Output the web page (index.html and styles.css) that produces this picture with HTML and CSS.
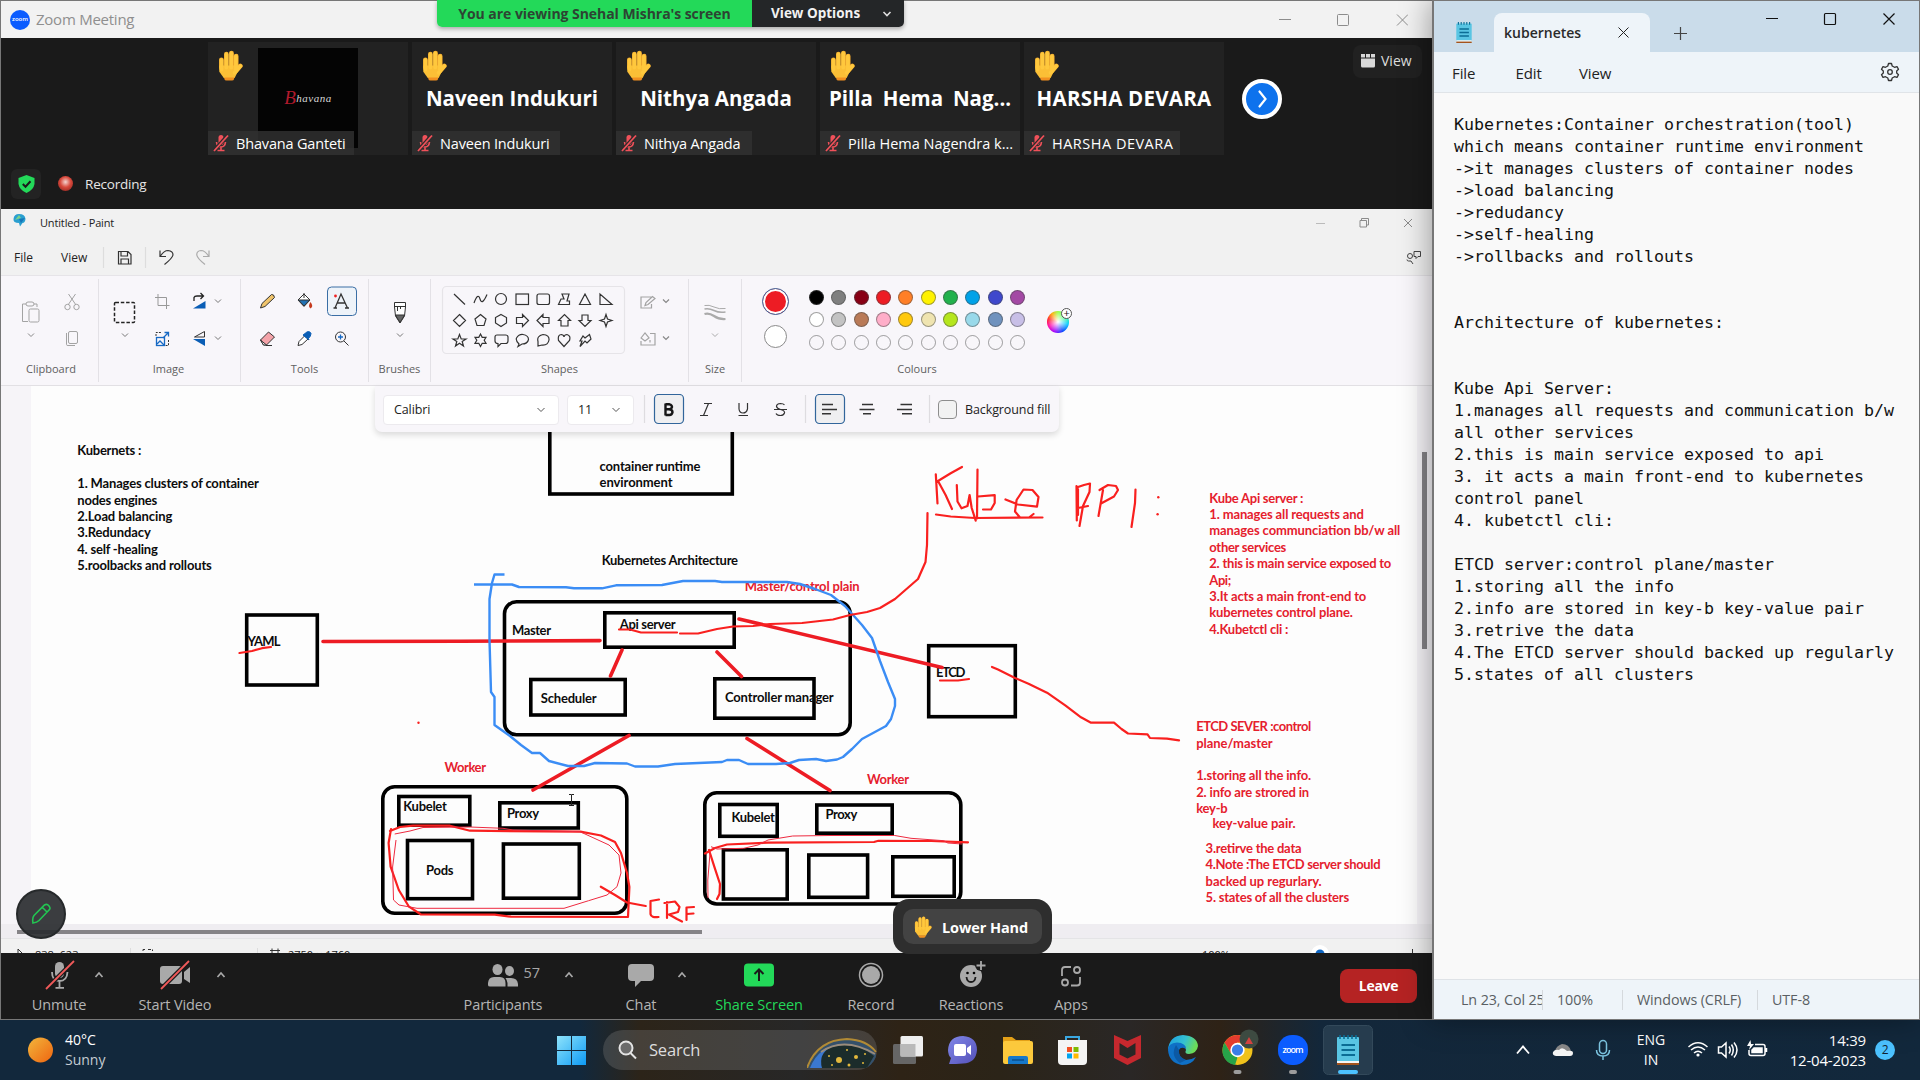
FILE: index.html
```html
<!DOCTYPE html>
<html lang="en">
<head>
<meta charset="utf-8">
<title>Zoom Meeting</title>
<link rel="stylesheet" href="styles.css">
</head>
<body>
<svg class="defs" width="0" height="0">
  <defs>
    <symbol id="hand" viewBox="0 0 24 30">
      <g fill="none" stroke="#e8a22c" stroke-linecap="round" stroke-width="4.6"><path d="M3.2 9.500V17M8 4V15M13 3V15M17.500 6V17M21.500 15.500L17.500 20"/></g>
      <path d="M1.200 15H19.500V20L16 27H5.500L1.200 21Z" fill="#fbbf36"/>
      <g fill="none" stroke="#ffc83d" stroke-linecap="round" stroke-width="3.700"><path d="M3.200 9.500V19M8 4V17M12.700 3V17M17.300 6V19M21.500 15.500L16 22"/></g>
      <path d="M6 26.500H15.500V28Q15 29.500 13.500 29.500H8Q6.500 29.500 6 28Z" fill="#f19020"/>
    </symbol>
    <symbol id="muted" viewBox="0 0 16 18">
      <g fill="none" stroke="#f0515a" stroke-width="1.600"><path d="M3.500 8Q4 13 8 13T12.500 8M8 13V16.500M4.500 16.500H11.500"/></g>
      <rect x="5.500" y="1" width="5" height="10" rx="2.500" fill="#f0515a"/>
      <path d="M1 16.500L15 1" stroke="#2b2b2b" stroke-width="3.500"/><path d="M1 17L15 1.500" stroke="#f0515a" stroke-width="1.800"/>
    </symbol>
    <symbol id="up" viewBox="0 0 10 8"><path d="M1.500 6L5 2L8.500 6" fill="none" stroke="#a9a9a9" stroke-width="1.700"/></symbol>
    <symbol id="pad" viewBox="0 0 22 30">
      <rect y="2" width="22" height="26" rx="1" fill="#59c5e3"/><path d="M0 26H22V28.500H0Z" fill="#f4f4f4"/><path d="M0 28H22V30H0Z" fill="#a4531c"/>
      <path d="M4.500 10H18M4.500 15H18M4.500 20H18" stroke="#0b6d95" stroke-width="2"/><path d="M3 0V4M7 0V4M11 0V4M15 0V4M19 0V4" stroke="#0b6d95" stroke-width="1.600"/>
    </symbol>
    <linearGradient id="sun" x2="1" y2="1"><stop stop-color="#f2b63c"/><stop offset="1" stop-color="#ef6510"/></linearGradient>
    <linearGradient id="win" x2="1" y2="1"><stop stop-color="#8ee3fb"/><stop offset="1" stop-color="#0d9af5"/></linearGradient>
    <linearGradient id="edge" x2="1" y2=".3"><stop stop-color="#1b9de2"/><stop offset=".6" stop-color="#35c1d0"/><stop offset="1" stop-color="#6bdc58"/></linearGradient>
    <linearGradient id="teams" x2="1" y2="1"><stop stop-color="#8087e8"/><stop offset="1" stop-color="#5450b8"/></linearGradient>
  </defs>
</svg>

<div class="desktop">
<section class="zoom">
  <header class="z-title">
    <span class="z-logo">zoom</span><span class="z-name">Zoom Meeting</span>
    <svg class="z-ctl" width="130" height="14" viewBox="1278 12 130 14" fill="none" stroke="#8c8c8c"><path d="M1279 18.500H1291M1397 13.500L1408 24.500M1408 13.500L1397 24.500"/><rect x="1337.500" y="13.500" width="11" height="11" rx="1"/></svg>
    <div class="banner"><span class="viewing">You are viewing Snehal Mishra's screen</span><span class="options">View Options<svg width="10" height="8" viewBox="0 0 10 8"><path d="M1.500 2L5 5.500L8.500 2" fill="none" stroke="#ddd" stroke-width="1.600"/></svg></span></div>
  </header>

  <div class="gallery">
    <div class="tiles">
      <div class="tile"><div class="photo"><b>B</b>havana</div><svg class="hand"><use href="#hand"/></svg><span class="tag w1"><svg><use href="#muted"/></svg>Bhavana Ganteti</span></div>
      <div class="tile"><strong>Naveen Indukuri</strong><svg class="hand"><use href="#hand"/></svg><span class="tag w2"><svg><use href="#muted"/></svg>Naveen Indukuri</span></div>
      <div class="tile"><strong>Nithya Angada</strong><svg class="hand"><use href="#hand"/></svg><span class="tag w3"><svg><use href="#muted"/></svg>Nithya Angada</span></div>
      <div class="tile"><strong class="wide">Pilla Hema Nag...</strong><svg class="hand"><use href="#hand"/></svg><span class="tag w4"><svg><use href="#muted"/></svg>Pilla Hema Nagendra k...</span></div>
      <div class="tile"><strong class="caps">HARSHA DEVARA</strong><svg class="hand"><use href="#hand"/></svg><span class="tag w5"><svg><use href="#muted"/></svg>HARSHA DEVARA</span></div>
    </div>
    <div class="next"><svg width="32" height="32" viewBox="0 0 32 32"><path d="M13.500 8.500L19.500 16L13.500 23.500" fill="none" stroke="#fff" stroke-width="2.200" stroke-linecap="round"/></svg></div>
    <div class="viewbtn"><svg width="14" height="14" viewBox="0 0 14 14" fill="#d8d8d8"><path d="M0 0H4V3.500H0ZM5 0H9V3.500H5ZM10 0H14V3.500H10ZM0 4.500H14V12Q14 13.500 12.500 13.500H1.500Q0 13.500 0 12Z"/></svg>View</div>
  </div>
  <div class="rec">
    <span class="shield"><svg width="17" height="18" viewBox="0 0 17 18"><path d="M8.500 0L16.500 3V9Q15.500 15 8.500 18Q1.500 15 .5 9V3Z" fill="#23d959"/><path d="M4.800 9L7.500 11.700L12.500 6.300" fill="none" stroke="#1a1a1a" stroke-width="2"/></svg></span>
    <i class="recdot"></i>Recording
  </div>

  <div class="paint">
    <div class="p-title">
      <svg width="13" height="13" viewBox="0 0 13 13"><path d="M6 0Q12 0 12.500 5Q12 9 9.500 9L7 12.500L6 9Q0 9 .5 5Q1 0 6 0Z" fill="#2a9fd0"/><path d="M2 6L6 1L8 4Z" fill="#7bd389"/><path d="M6 5L12 4L8 9Z" fill="#1676b8"/></svg><span>Untitled - Paint</span>
      <svg class="p-ctl" width="98" height="12" viewBox="1315 216 98 12" fill="none"><path d="M1316 222.500H1325" stroke="#bbb"/><path d="M1360 219.500H1366.500V226H1360ZM1361.500 219V217.500H1368.500V224H1367M1404 218L1412 226M1412 218L1404 226" stroke="#8b8b8b"/></svg>
    </div>
    <div class="p-menu"><span class="m1">File</span><span class="m2">View</span>
      <svg width="124" height="24" viewBox="96 245 124 24" fill="none" stroke="#333" stroke-width="1.200"><path d="M103.500 246V267M145.500 246V267" stroke="#ddd"/><path d="M118.500 250.500H128L131 253.500V263H118.500ZM121 250.500V255H127.500V250.500M121 263V258H128.500V263"/><path d="M160 249.500V255.500H166M160.500 255Q164 249.500 168 249.500Q173 250 173 254Q172.500 257 164.500 263.500"/><path stroke="#aaa" d="M209 249.500V255.500H203M208.500 255Q205 249.500 201 249.500Q196.500 250 196.800 254Q197 257 205 263.500"/></svg>
      <svg class="share" width="16" height="15" viewBox="0 0 16 15" fill="none" stroke="#444"><path d="M8 1.500H14.500V6.500H12L10 8.500V6.500H8ZM7 14L5 11H2.500Q1 11 1 9.500"/><circle cx="4" cy="6" r="2.500"/></svg>
    </div>
    <div class="ribbon">
      <div class="grp g1"><svg width="97" height="82" viewBox="1 276 97 82" fill="none" stroke="#a3a3a3"><path d="M26 304H22.500V321.500H28M34 304H37V307"/><rect x="26" y="302" width="8" height="4" rx="2"/><rect x="29" y="309" width="10" height="13" rx="1.500"/><path d="M28 333.500L31 336.500L34 333.500" stroke="#888"/><path d="M68.500 294L76 305M75.500 294L68 305"/><circle cx="67.500" cy="307" r="2.700"/><circle cx="76.500" cy="307" r="2.700"/><rect x="68.500" y="331.500" width="9" height="12" rx="1.500"/><path d="M66.500 333V344.500Q66.500 345.500 68 345.500H75"/></svg><label>Clipboard</label></div>
      <div class="grp g2"><svg width="141" height="82" viewBox="99 276 141 82" fill="none" stroke="#777"><rect x="114.500" y="302.500" width="20" height="20" rx="1" stroke="#222" stroke-width="1.500" stroke-dasharray="3.500 1.800"/><path d="M122 333.500L125 336.500L128 333.500M215 299.500L218 302.500L221 299.500M215 336.500L218 339.500L221 336.500"/><path d="M158 294V305.500H169.500M155 297.500H166.500V309" stroke="#999"/><path d="M194 301V297.500Q194.500 296 197 296H203M200.500 293L203.500 296L200.500 299" stroke="#222" stroke-width="1.300"/><path d="M205.500 301V308.500H193Z" fill="#0a5db5" stroke="none"/><path d="M204.500 331.500V337H194.500Z" stroke="#333"/><path d="M205 339V346L193 339Z" fill="#0a5db5" stroke="none"/><path d="M156 336V332.500H162M168.500 340V345.500H165" stroke="#333" stroke-dasharray="2 1.200"/><rect x="156.500" y="337.500" width="8" height="8" stroke="#1769c4" stroke-width="1.300"/><path d="M157 344L160 341L164 345M163 338L168 333M164.500 332.500H168.500V336.500" stroke="#1769c4" stroke-width="1.300"/></svg><label>Image</label></div>
      <div class="grp g3"><svg width="127" height="82" viewBox="241 276 127 82" fill="none" stroke="#333"><rect x="327.500" y="287" width="29" height="28.500" rx="4" fill="#eef3f9" stroke="#3a6ea5"/><path d="M260.500 308L262 303.500L271.500 294.500Q274 294 274.500 297.500L265 306.500Z" fill="#f0c46c"/><path d="M298 300L304 294L310 300L304 306.500Z" fill="#fff"/><path d="M298.500 300H309.500L304 306Z" fill="#2273b5"/><path d="M304 293V298"/><path d="M310.500 302Q314 306.500 310.500 308.500Q307.500 306.500 310.500 302Z" fill="#c53a1e" stroke="none"/><path d="M335 308L341 294L347.500 308M337.500 303H345M333.500 308H337M345 308H349" stroke-width="1.300"/><circle cx="335.500" cy="296" r="1.400" fill="#e22" stroke="none"/><path d="M260.500 340L268.500 332L274.500 337L266.500 345H263.500Z" fill="#f4a3a9"/><path d="M260.500 340L266.500 345H263.500Z" fill="#fff"/><path d="M266 345.500H272"/><path d="M298 345.500L299 341.500L304.500 336L308 339L302 344.500Z" fill="#fff"/><path d="M303 335L305 333.500Q309 329.500 311 333.500Q311 336 308.500 338.500L309 340Z" fill="#0a5db5" stroke="#0a5db5"/><circle cx="340.500" cy="337" r="5"/><path d="M344 341L348.500 345.500"/><path d="M338 337H343M340.500 334.500V339.500" stroke="#1769c4" stroke-width="1.300"/></svg><label>Tools</label></div>
      <div class="grp g4"><svg width="61" height="82" viewBox="369 276 61 82" fill="none" stroke="#333"><path d="M394.500 302.500H405.500V307L404.500 316L400 323L395.500 316L394.500 307Z" fill="#fff"/><path d="M394.500 306.500H405.500M397.500 306V311M400.500 306V309"/><path d="M395.500 315H404.500L400 322.500Z" fill="#666"/><path d="M397 333.500L400 336.500L403 333.500" stroke="#777"/></svg><label>Brushes</label></div>
      <div class="grp g5"><svg width="257" height="82" viewBox="431 276 257 82" fill="none" stroke="#333" stroke-width="1.200"><rect x="442.500" y="286.500" width="182" height="67" rx="4" stroke="#e6e4e8"/>
        <path d="M454 294L465 304.500M474 303Q478 292 480 299T487 294.500"/><ellipse cx="501" cy="299" rx="5.500" ry="5.500"/><rect x="516" y="294" width="12.500" height="10.500"/><rect x="537" y="294" width="12.500" height="10.500" rx="2"/><path d="M562 294H569L567 301H569.500V304.500H558.500L561 299H564ZM585 294L590.500 304.500H579.500ZM600 294V304.500H612Z"/>
        <path d="M459.500 314.500L465.500 320.500L459.500 326.500L453.500 320.500ZM480.500 314.500L486 319L484 325.500H477L475 319ZM501 314.500L506.500 317.500V323L501 326.500L495.500 323V317.500ZM516.500 317.500H522.500V314.500L528.500 320.500L522.500 326.500V323.500H516.500ZM549 317.500H543V314.500L537 320.500L543 326.500V323.500H549ZM561 326V320.500H558.500L564.500 314.500L570.500 320.500H568V326ZM582 315V320.500H579L585 326.500L591 320.500H588V315ZM606 314.500L607.500 319L612 320.500L607.500 322L606 326.500L604.500 322L600 320.500L604.500 319Z"/>
        <path d="M459.500 334.500L461.200 339H466L462.200 341.500L463.500 346L459.500 343.200L455.500 346L456.800 341.500L453 339H457.800ZM480.500 334L482.200 337.300H486L484.200 340.300L486 343.300H482.200L480.500 346.500L478.800 343.300H475L476.800 340.300L475 337.300H478.800ZM497 335H505.500Q508 335 508 337V341Q508 343.500 505.500 343.500H501L498 346.500V343.500Q495 343.500 495 341V337Q495 335 497 335ZM519 344Q515.500 341 516.500 338Q519 334 523 334.500Q528.500 335.500 528.500 339.500Q527.500 344 522 344L518 346.500ZM538 346V341.500Q536.500 336 543 334.500Q549.500 335 549 340Q548 345.500 542 345ZM564 346.500L558.500 340.500Q557.500 334.500 561.500 334.500Q564 335 564 337Q564.500 334.500 567 334.500Q571 335.500 569.500 340.500ZM585 338L589.500 334.500L591 339L587 343L585 341L580 346.500L582 341H580L583 336Z"/>
        <g stroke="#a3a3a3"><path d="M652 297H641V308H651.500V304M645 305.500L646 302.500L652.500 296.500L655 298.500L648 304.500ZM650 333.500H655V345H641V341"/><path d="M641 338L645 333L649 338L645 341ZM650 340V342.500"/></g><path stroke="#888" d="M663 299.500L666 302.500L669 299.500M663 336.500L666 339.500L669 336.500"/></svg><label>Shapes</label></div>
      <div class="grp g6"><svg width="53" height="82" viewBox="689 276 53 82" fill="none" stroke="#aaa"><path d="M704.500 305.500Q709 304.500 714 307T725.500 308.500"/><path d="M704.500 309Q709 308 714 310.500T725.500 312" stroke-width="1.500"/><path d="M704.500 314Q709 312.500 714 316T725.500 319" stroke-width="2.200"/><path d="M712 333.500L715 336.500L718 333.500"/></svg><label>Size</label></div>
      <div class="grp g7">
        <div class="colrow">
          <div class="current"><i class="c1"></i><i class="c2"></i></div>
          <div class="palette">
            <i style="background:#000"></i><i style="background:#7f7f7f"></i><i style="background:#880015"></i><i style="background:#ed1c24"></i><i style="background:#ff7f27"></i><i style="background:#fff200"></i><i style="background:#22b14c"></i><i style="background:#00a2e8"></i><i style="background:#3f48cc"></i><i style="background:#a349a4"></i>
            <i style="background:#fff"></i><i style="background:#c3c3c3"></i><i style="background:#b97a57"></i><i style="background:#ffaec9"></i><i style="background:#ffc90e"></i><i style="background:#efe4b0"></i><i style="background:#b5e61d"></i><i style="background:#99d9ea"></i><i style="background:#7092be"></i><i style="background:#c8bfe7"></i>
            <i></i><i></i><i></i><i></i><i></i><i></i><i></i><i></i><i></i><i></i>
          </div>
          <div class="wheel"><span>+</span></div>
        </div>
        <label>Colours</label>
      </div>
    </div>

    <div class="stage">
      <svg class="canvas" width="1386" height="538" viewBox="31 386 1386 538" fill="none">
        <g stroke="#000" stroke-width="3.600">
          <rect x="549.800" y="400" width="182.500" height="94"/>
          <rect x="504.500" y="601.800" width="345.700" height="133" rx="12"/>
          <rect x="604.800" y="612.800" width="129.400" height="34.400"/>
          <rect x="530.800" y="679.500" width="94.400" height="35.500"/>
          <rect x="714.800" y="678.800" width="99.200" height="39.400"/>
          <rect x="928.700" y="645.700" width="86.600" height="71"/>
          <rect x="246.700" y="615" width="70.600" height="70"/>
          <rect x="382.800" y="786.800" width="244" height="126.400" rx="12"/>
          <rect x="704.800" y="792.800" width="256" height="111.200" rx="12"/>
          <rect x="398.800" y="796.500" width="71" height="28.700"/>
          <rect x="499.800" y="802.800" width="78.500" height="25.200"/>
          <rect x="719.800" y="804.500" width="57.400" height="31.800"/>
          <rect x="816.800" y="805" width="75.400" height="28.200"/>
          <rect x="407.500" y="840.500" width="65" height="58.200"/>
          <rect x="503.400" y="844" width="75.900" height="54.200"/>
          <rect x="723.400" y="849.800" width="63.800" height="49.200"/>
          <rect x="808.800" y="855" width="58.800" height="42.300"/>
          <rect x="892.800" y="856.800" width="61.400" height="39.500"/>
        </g>
        <g class="ink" fill="#0c0c0c" transform="translate(0 .8)">
          <text x="77.300" y="454.700" textLength="64">Kubernets :</text>
          <text x="77.300" y="487.500" textLength="181.500">1. Manages clusters of container</text>
          <text x="77.300" y="504" textLength="80">nodes engines</text>
          <text x="77.300" y="520.300" textLength="95">2.Load balancing</text>
          <text x="77.300" y="536.700" textLength="73.500">3.Redundacy</text>
          <text x="77.300" y="553" textLength="80.500">4. self -healing</text>
          <text x="77.300" y="569.500" textLength="134.500">5.roolbacks and rollouts</text>
          <text x="599.500" y="470" textLength="101">container runtime</text>
          <text x="599.500" y="486.200" textLength="73">environment</text>
          <text x="601.700" y="564.300" textLength="136.300">Kubernetes Architecture</text>
          <text x="512" y="634" textLength="39">Master</text>
          <text x="619.700" y="628" textLength="56">Api server</text>
          <text x="540.700" y="702.300" textLength="56">Scheduler</text>
          <text x="725" y="701" textLength="108.700">Controller manager</text>
          <text x="247.500" y="645" textLength="33">YAML</text>
          <text x="936" y="676.700" textLength="29.500">ETCD</text>
          <text x="403.300" y="810.300" textLength="43.500">Kubelet</text>
          <text x="507" y="817.700" textLength="32">Proxy</text>
          <text x="731.400" y="821" textLength="43.500">Kubelet</text>
          <text x="825.400" y="818.700" textLength="32">Proxy</text>
          <text x="426" y="874" textLength="27.500">Pods</text>
        </g>
        <g class="ink" fill="#e5202d" transform="translate(0 .6)">
          <text x="744.700" y="590" textLength="115">Master/control plain</text>
          <text x="444.500" y="771" textLength="41.500">Worker</text>
          <text x="867" y="783.500" textLength="42">Worker</text>
          <text x="1209.300" y="502" textLength="94">Kube Api server :</text>
          <text x="1209.300" y="518.300" textLength="154.500">1. manages all requests and</text>
          <text x="1209.300" y="534.700" textLength="191">manages communciation bb/w all</text>
          <text x="1209.300" y="551.200" textLength="77">other services</text>
          <text x="1209.300" y="567.500" textLength="182">2. this is main service exposed to</text>
          <text x="1209.300" y="584" textLength="22">Api;</text>
          <text x="1209.300" y="600.300" textLength="157">3.It acts a main front-end to</text>
          <text x="1209.300" y="616.700" textLength="143.500">kubernetes control plane.</text>
          <text x="1209.300" y="633" textLength="79">4.Kubetctl cli :</text>
          <text x="1196.200" y="730.700" textLength="115">ETCD SEVER :control</text>
          <text x="1196.200" y="747" textLength="76.500">plane/master</text>
          <text x="1196.200" y="779.700" textLength="115">1.storing all the info.</text>
          <text x="1196.200" y="796" textLength="113">2. info are strored in</text>
          <text x="1196.200" y="812.500" textLength="31.500">key-b</text>
          <text x="1212.500" y="827.500" textLength="83">key-value pair.</text>
          <text x="1205.600" y="852" textLength="96">3.retirve the data</text>
          <text x="1205.600" y="868.500" textLength="175">4.Note :The ETCD server should</text>
          <text x="1205.600" y="885" textLength="116">backed up regurlary.</text>
          <text x="1205.600" y="901.300" textLength="143.500">5. states of all the clusters</text>
        </g>
        <g stroke="#ed1c24" stroke-width="3.600" stroke-linecap="round">
          <path d="M323 641.500L461 641.200L600 640.600M622 650L610.500 676M717 652L741.500 676.500M739 619L942 667.500M629 735.500L533 790M747 738.500L830 790.500"/>
        </g>
        <path stroke="#3b8df5" stroke-width="2.400" stroke-linejoin="round" d="M474 584.500H512L519 587L566 587.300L574 588.300H602L616 585.300L662 585L683 581H715L722 582H787L800 584L815 589L831 595L845 606L862 625L872 638L880 661L888 682L895 699V706L891 719L886 726L862 739L852 749L843 757L837 759.500L826 761L816 759L799 760L790 763L776 764H748L739 760H727L722 762L675 764L658 766.500H635L627 763.500L595 763L584 766H568L549 761L540 753H532L521 745L510 736L494.500 725V697L491 692L489.500 640V599L492 583L494.500 574.500H504.500"/>
        <g stroke="#f9201f" stroke-width="2.200" stroke-linejoin="round" stroke-linecap="round">
          <path d="M619 629.500L630 629.500L641 632.500H677M680 633.500H698L717 629L733 626.500L753 626L770 624L802 623L833 619.500L850 615L867 612L880 608L895 599L918 579L925.500 562L927 545L927.500 513"/>
          <path d="M940 680.500H958L969 679M239.500 653L252 651L262 648.200L271 647"/>
          <path d="M992 667L998 669.500L1015 678L1028.500 683.700L1047 692.700L1065.600 705.700L1081 717.300L1091 722.700H1114L1121.500 729L1128 733.500L1147.500 734.300L1150 738L1167 738.700L1179 740.300"/>
          <path d="M935.800 474.300L937.500 503.500M962 467L950.700 473.300L938 481L945.600 495L952 509M956.800 485L957.500 501.500L961.500 508.300L967.500 506L969.600 495L971.700 508L975.700 520.700M977.500 469.500L977 518.500M978 496.500L994.700 495.200V503L991 509.500H983M1005.500 499.500L1018 504.500L1037 506.700L1038.500 497L1032.500 490L1023.500 489.500L1016.600 500L1015 511.500L1020 517.500L1029 517.500L1033.500 514M936 514.500L950.700 516.500L975 518L1042.500 517.500"/>
          <path d="M1076.500 486L1076.800 520.500M1078 487L1084 485L1090 483.500L1089.500 492L1083 506L1079.500 526M1078 489V515M1078 508L1088 506M1103 490L1098.500 516M1099.500 490L1108 485L1116 486L1118 490L1114 496.500L1101 503.500M1135.500 489.500L1135 503L1131.500 527"/>
          <path d="M390 831L400 827L413 825.700H450L470 830.700L580.400 831.700L601 835.500L615 842L621 853L627 873L629.400 887L628 917L511 916.700L494.700 914.700L421 914.500L409 906.700L398.800 890L390.600 866.700L388.600 843L391 829"/>
          <path d="M600.800 886.700L615 895L627 902.500L645.700 906M659 899.500L650.500 901V914Q651 918 658.500 917M667 902V918M664.500 903L675 901.500L679.500 907L678 912L669 914.500L677 919L682 921.500M694 907L686.500 907.500V920M687 914L693.500 913.500M685.500 925H695.500"/>
          <path d="M968 842.300L931.400 841L878.400 840.800L874 842L768 842.700L727 844.500L715 848L705 853.500M709 850L714.300 866.700L720 884L719.500 894L717 899"/>
        </g>
        <path stroke="#ee2a40" d="M394.700 834L410 831L423 827.500L470 827L503 828.300L513 830L580 831.700L609 845L619 855L621 873L617 886.700L607 895L588.600 900.700L564 908.300H417L399 905L393.500 900L392.600 867L396 840M711 846.700L717 849L743.700 848.300L758 845L768 840L792.700 836L830 835.500H894.700L911 838.300L943.700 840.700L947.800 843L962 844M710 853L707.800 880L708 898"/>
        <g fill="#f9201f"><circle cx="1158.300" cy="497.300" r="1.200"/><circle cx="1157.600" cy="514.300" r="1.200"/><circle cx="418.500" cy="722.800" r="1.200"/></g>
        <path d="M569 794.500H571.500H574M571.500 795V805M569 805.500H574" stroke="#222"/>
      </svg>
      <i class="vbar"></i>
      <div class="textbar">
        <span class="sel s1">Calibri<svg width="8" height="6" viewBox="0 0 8 6"><path d="M.5 1L4 4.500L7.500 1" fill="none" stroke="#555"/></svg></span>
        <span class="sel s2">11<svg width="8" height="6" viewBox="0 0 8 6"><path d="M.5 1L4 4.500L7.500 1" fill="none" stroke="#555"/></svg></span>
        <svg width="292" height="32" viewBox="642 394 292 32" fill="none" stroke="#333" stroke-width="1.200"><path stroke="#dedce0" d="M644.500 395V423M805.500 395V423M929.500 395V423"/><g fill="#efeff1" stroke="#31659b"><rect x="654.500" y="394.500" width="29" height="29" rx="4"/><rect x="815.500" y="394.500" width="29" height="29" rx="4"/></g><path d="M665.500 403.500V415.500M665.500 404.300H669.500Q672 405 672 407Q671.500 409.200 669 409.200H665.500M669 409.200Q672.500 409.500 672.500 412.300Q672 415 669.500 415H665.500" stroke="#161616" stroke-width="2.400"/><path d="M704 403.500H712M700 415.500H708M708.500 403.500L703.500 415.500M739 403V409Q739.500 413 743 413T747.500 409V403M738.500 415.500H748M784.500 405Q783.500 403.500 780.500 403.500Q776.500 403.700 776.500 406.500Q777 408.500 780.500 409.500Q785 410.500 784.500 413Q783.500 415.500 780.500 415.500Q777 415.500 776 413.500M774 409.500H787"/><path d="M822 404.500H833M822 409.500H837M822 413.700H831M862 404.500H873M859.500 409.500H874.500M863 413.700H871M900.500 404.500H912M897 409.500H912M902 413.700H912" stroke-width="1.400"/></svg>
        <i class="check"></i><span class="bg">Background fill</span>
      </div>
    </div>
    <div class="hscroll"><i></i></div>
    <div class="p-status"><svg width="1431" height="14" viewBox="1 939 1431 14" fill="none" stroke="#333"><path stroke="#ddd" d="M130.500 948V953M257.500 948V953"/><path d="M18 949V956L22 953ZM143 951V949.500H145M148 949.500H151M152.500 951V949.500M270 950.500H280M272 948.500V956M278 948.500V956M1412.500 949V956"/><g class="tiny"><text x="35" y="959">838, 623</text><text x="288" y="959">2750 × 1760</text><text x="1202" y="959">100%</text></g><circle cx="1320" cy="954" r="9" fill="#fff" stroke="none"/><circle cx="1320" cy="954" r="4.500" fill="#0f66c2" stroke="none"/></svg></div>
    <div class="annot"><svg width="20" height="22" viewBox="0 0 20 22" fill="none" stroke="#23c552" stroke-width="1.600"><path d="M2 20Q1 15 3 12.500L13.500 2Q16 .5 18 3T18 7L8 17.500Q6 19.500 2 20ZM11.500 4.500L16 9"/></svg></div>
  </div>

  <footer class="z-bar">
    <div class="zb b1"><svg width="100" height="36" viewBox="8 957 100 36" fill="none" stroke="#a9a9a9" stroke-width="1.800"><rect x="54" y="962" width="9" height="16" rx="4.500" fill="#a9a9a9" stroke="none"/><path d="M51 972Q51 981 58.500 981T66.500 972M58.500 981V987.500M54.500 987.800H63"/><path d="M45 989L73 961" stroke="#1a1a1a" stroke-width="4.500"/><path d="M45 989L73 961" stroke="#f05a5a" stroke-width="1.800"/><use href="#up" x="93" y="971" width="10" height="8"/></svg><span>Unmute</span></div>
    <div class="zb b2"><svg width="120" height="36" viewBox="115 957 120 36" fill="none"><rect x="160" y="966" width="22" height="18" rx="3" fill="#a9a9a9"/><path d="M184 972L190 967V983L184 979Z" fill="#a9a9a9"/><path d="M161 989L189 961" stroke="#1a1a1a" stroke-width="4.500"/><path d="M161 989L189 961" stroke="#f05a5a" stroke-width="1.800"/><use href="#up" x="216" y="971" width="10" height="8"/></svg><span>Start Video</span></div>
    <div class="zb b3"><svg width="150" height="36" viewBox="428 957 150 36" fill="#a9a9a9"><ellipse cx="497.500" cy="969.500" rx="5" ry="5.500"/><ellipse cx="509.500" cy="971" rx="4.500" ry="5"/><path d="M488 986V983Q488.500 977 494 977H500Q505.500 977 505.500 983V986.500H490Q488 986.500 488 985ZM507.500 986.500V983Q507 980 505.500 978H511Q517.500 978 518 984V986.500Z"/><text class="cnt" x="523.500" y="978">57</text><use href="#up" x="564" y="971" width="10" height="8"/></svg><span>Participants</span></div>
    <div class="zb b4"><svg width="100" height="36" viewBox="591 957 100 36"><path d="M632 964H650Q654 964 654 968V977Q654 981 650 981H641L635 987V981H632Q628 981 628 977V968Q628 964 632 964Z" fill="#a9a9a9"/><use href="#up" x="677" y="971" width="10" height="8"/></svg><span>Chat</span></div>
    <div class="zb b5"><svg width="60" height="36" viewBox="729 957 60 36"><rect x="744" y="963.500" width="30" height="23" rx="4" fill="#23d959"/><path d="M759 981V970M754.500 974L759 969.500L763.500 974" fill="none" stroke="#1a1a1a" stroke-width="2"/></svg><span>Share Screen</span></div>
    <div class="zb b6"><svg width="60" height="36" viewBox="841 957 60 36"><circle cx="871" cy="975" r="11.500" fill="none" stroke="#a9a9a9" stroke-width="1.500"/><circle cx="871" cy="975" r="9" fill="#a9a9a9"/></svg><span>Record</span></div>
    <div class="zb b7"><svg width="60" height="36" viewBox="941 957 60 36"><circle cx="971" cy="976" r="11" fill="#a9a9a9"/><circle cx="981" cy="965" r="6" fill="#1a1a1a"/><path d="M981 961V970M976.500 965.500H985.500" stroke="#a9a9a9" stroke-width="1.800"/><path d="M966.500 977Q967 982 971 982T975.500 977" fill="none" stroke="#1a1a1a" stroke-width="1.800"/><circle cx="967.500" cy="973" r="1.300"/><circle cx="974" cy="973" r="1.300"/></svg><span>Reactions</span></div>
    <div class="zb b8"><svg width="60" height="36" viewBox="1041 957 60 36" fill="none" stroke="#a9a9a9" stroke-width="1.800"><circle cx="1077" cy="970" r="3"/><circle cx="1065" cy="982.500" r="3"/><path d="M1062 976V970Q1062 967 1065 967H1071M1080 977V982.500Q1080 985.500 1077 985.500H1071"/></svg><span>Apps</span></div>
    <button class="leave">Leave</button>
    <div class="lower"><div><svg width="18" height="22"><use href="#hand"/></svg>Lower Hand</div></div>
  </footer>
</section>

<section class="notepad">
  <header class="n-title"><svg width="16" height="21" class="n-ico"><use href="#pad"/></svg>
    <div class="tab">kubernetes<svg width="11" height="11" viewBox="0 0 11 11"><path d="M.5 .5L10.500 10.500M10.500 .5L.5 10.500" stroke="#222"/></svg></div>
    <svg class="plus" width="13" height="13" viewBox="0 0 13 13"><path d="M6.500 0V13M0 6.500H13" stroke="#444" stroke-width="1.200"/></svg>
    <svg class="n-ctl" width="130" height="14" viewBox="1766 12 130 14" fill="none" stroke="#111" stroke-width="1.200"><path d="M1766 18.500H1778M1883.500 13.500L1894.500 24.500M1894.500 13.500L1883.500 24.500"/><rect x="1824.500" y="13.500" width="11" height="11" rx="1"/></svg>
  </header>
  <div class="n-menu"><span>File</span><span>Edit</span><span>View</span><svg width="20" height="20" viewBox="0 0 20 20" fill="none" stroke="#333" stroke-width="1.300"><path d="M8.500 1.500H11.500L12.200 4L14.500 5.300L17 4.600L18.500 7.300L16.700 9V11L18.500 12.700L17 15.400L14.500 14.700L12.200 16L11.500 18.500H8.500L7.800 16L5.500 14.700L3 15.400L1.500 12.700L3.300 11V9L1.500 7.300L3 4.600L5.500 5.300L7.800 4Z" stroke-linejoin="round"/><circle cx="10" cy="10" r="2.300"/></svg></div>
  <pre class="doc">Kubernetes:Container orchestration(tool)
which means container runtime environment
-&gt;it manages clusters of container nodes
-&gt;load balancing
-&gt;redudancy
-&gt;self-healing
-&gt;rollbacks and rollouts


Architecture of kubernetes:


Kube Api Server:
1.manages all requests and communication b/w
all other services
2.this is main service exposed to api
3. it acts a main front-end to kubernetes
control panel
4. kubetctl cli:

ETCD server:control plane/master
1.storing all the info
2.info are stored in key-b key-value pair
3.retrive the data
4.The ETCD server should backed up regularly
5.states of all clusters</pre>
  <footer class="n-status"><span class="st1">Ln 23, Col 25</span><span class="st2">100%</span><span class="st3">Windows (CRLF)</span><span class="st4">UTF-8</span></footer>
</section>
</div>

<nav class="taskbar">
  <div class="weather"><svg width="25" height="26" viewBox="0 0 25 26"><circle cx="12.500" cy="13" r="12.500" fill="url(#sun)"/></svg><p>40°C<br><span>Sunny</span></p></div>
  <svg class="start" width="29" height="29" viewBox="0 0 29 29"><path d="M0 0H14V14H0ZM15 0H29V14H15ZM0 15H14V29H0ZM15 15H29V29H15Z" fill="url(#win)"/></svg>
  <div class="search"><svg width="19" height="20" viewBox="0 0 19 20" fill="none" stroke="#e4e4e4" stroke-width="2"><circle cx="8" cy="8" r="6.500" fill="#6b6b6b"/><path d="M12.500 13L18 18.500"/></svg><span>Search</span>
    <svg class="art" width="70" height="30" viewBox="808 1038 70 30"><path d="M808 1068Q818 1040 848 1039Q868 1040 877 1054V1060Q872 1068 866 1068Z" fill="#34506a"/><path d="M808 1068Q818 1040 848 1039Q868 1040 877 1052" fill="none" stroke="#b18a35" stroke-width="2"/><path d="M811 1068Q820 1045 845 1044L833 1068Z" fill="#3b78cf"/><path d="M823 1068Q819 1054 832 1047Q855 1040 875 1056L868 1068Z" fill="#1b2c2b"/><path d="M822 1052Q845 1036 876 1054" fill="none" stroke="#9a8c7c" stroke-width="2"/><g fill="#e2b83d"><circle cx="840" cy="1060" r="3"/><circle cx="848" cy="1050" r="1"/><circle cx="857" cy="1057" r="2"/><circle cx="830" cy="1056" r="1"/><circle cx="850" cy="1065" r="1.500"/><circle cx="833" cy="1065" r="1"/><circle cx="866" cy="1054" r="1"/><circle cx="864" cy="1063" r="1"/></g></svg></div>
  <svg class="apps" width="492" height="56" viewBox="886 1022 492 56">
    <rect x="893" y="1044" width="23" height="20" rx="1.500" fill="#666"/><rect x="900.500" y="1036" width="22.500" height="20.500" rx="1.500" fill="#eee"/><rect x="900.500" y="1044" width="15" height="12.500" fill="#b9b9b9"/>
    <path d="M949 1064L951 1058Q948 1055 948 1050Q949 1036 963 1036Q977 1037 977 1050Q976 1063 963 1063.500Q956 1064 949 1064Z" fill="url(#teams)"/><rect x="954" y="1044" width="12" height="12" rx="2" fill="#fff"/><path d="M967 1048L971 1045V1055L967 1052Z" fill="#fff"/>
    <path d="M1003 1037H1012L1016 1040H1030V1048H1003Z" fill="#e3a017"/><rect x="1003" y="1041" width="30" height="23" rx="2" fill="#fcc93c"/><path d="M1008 1064V1058Q1008 1056 1010 1056H1026Q1028 1056 1028 1058V1064Z" fill="#1678ca"/><path d="M1012 1060H1024" stroke="#0b4f8c" stroke-width="1.500"/>
    <path d="M1066 1042V1037H1079V1042" fill="none" stroke="#3aa7e0" stroke-width="2"/><path d="M1058 1040H1087V1061Q1087 1065 1083 1065H1062Q1058 1065 1058 1061Z" fill="#f4f4f4"/><path d="M1067 1047H1072V1052H1067Z" fill="#f25022"/><path d="M1073.500 1047H1078.500V1052H1073.500Z" fill="#7fba00"/><path d="M1067 1053.500H1072V1058.500H1067Z" fill="#00a4ef"/><path d="M1073.500 1053.500H1078.500V1058.500H1073.500Z" fill="#ffb900"/>
    <path d="M1114 1035L1127.500 1041L1141 1035V1058L1127.500 1065L1114 1058ZM1119.500 1043V1054.500L1127.500 1058.500L1135.500 1054.500V1043L1127.500 1048Z" fill="#c6282e" fill-rule="evenodd"/>
    <path d="M1168 1050Q1169 1036 1183 1035Q1197 1036 1198 1046Q1197 1053 1189 1054Q1184 1054 1186 1050Q1185 1044 1178 1044Q1170 1045 1168 1050Z" fill="url(#edge)"/><path d="M1168 1050Q1168 1043 1177 1042.500Q1186 1043 1186 1049Q1181 1046 1179 1050Q1178 1058 1186 1060Q1191 1060 1196 1057Q1192 1065 1182 1065Q1169 1063 1168 1050Z" fill="#0f70c6"/><path d="M1176 1045Q1170 1056 1180 1063L1186 1060Q1178 1057 1179 1050Z" fill="#0c59a4"/>
    <g><circle cx="1237.500" cy="1050" r="15" fill="#f1c21b"/><path d="M1224.500 1042.500Q1229 1035 1237.500 1035T1250.500 1042.500H1237.500L1231 1053.700Z" fill="#e33b2e"/><path d="M1224.500 1042.500L1231 1053.700L1237.500 1057.500L1235 1065Q1226 1063.500 1223 1055Q1221.500 1048 1224.500 1042.500Z" fill="#27a349"/><circle cx="1237.500" cy="1050" r="7.200" fill="#fff"/><circle cx="1237.500" cy="1050" r="5.600" fill="#3b7de8"/><circle cx="1249" cy="1039" r="9.500" fill="#3d4a41"/><path d="M1245 1044L1249 1037L1253 1044Z" fill="#d2423f"/></g>
    <rect x="1233.500" y="1070" width="8" height="4" rx="2" fill="#9c9c9c"/><rect x="1289" y="1070" width="8" height="4" rx="2" fill="#9c9c9c"/>
    <rect x="1278" y="1035" width="30" height="30" rx="14" fill="#0b5cff"/><text class="zt" x="1282.500" y="1052.500" textLength="21">zoom</text>
    <rect x="1323.500" y="1025.500" width="49" height="49" rx="5" fill="#263c4e" stroke="#33495a"/><use href="#pad" x="1337" y="1035" width="22" height="30"/><rect x="1338" y="1070" width="20" height="4" rx="2" fill="#4cc2ff"/>
  </svg>
  <svg class="tray" width="100" height="24" viewBox="1513 1038 100 24" fill="none" stroke="#fff" stroke-width="1.800"><path d="M1517 1053.500L1523 1046.500L1529 1053.500"/><path d="M1555 1051Q1556 1046 1562 1044Q1569 1044 1571 1051Z" fill="#888" stroke="none"/><path d="M1556 1056Q1552 1055.500 1553 1052Q1555 1049 1559 1050Q1562 1046 1567 1051Q1573 1050 1573 1053Q1573 1056 1570 1056Z" fill="#f4f4f4" stroke="none"/><g stroke="#7cc4e0" stroke-width="1.500"><rect x="1599.500" y="1040.500" width="7" height="13" rx="3.500"/><path d="M1596.500 1050Q1596.500 1056 1603 1056T1609.500 1050M1603 1056V1060"/></g></svg>
  <p class="lang">ENG<br>IN</p>
  <svg class="net" width="84" height="22" viewBox="1686 1039 84 22" fill="none" stroke="#fff" stroke-width="1.500"><path d="M1688.500 1047Q1698 1038.500 1707.500 1047M1691 1050Q1698 1044 1705 1050M1694 1053Q1698 1049.500 1702 1053"/><circle cx="1698" cy="1055" r="1.600" fill="#fff" stroke="none"/><path d="M1718.500 1047V1053H1721.500L1726 1057V1043L1721.500 1047ZM1729 1046.500Q1731.500 1050 1729 1053.500M1731.500 1044.500Q1735 1050 1731.500 1055.500M1734 1042.500Q1740 1050 1734 1057.500"/><path d="M1755 1044.500H1763Q1765 1044.500 1765 1046.500V1053.500Q1765 1055.500 1763 1055.500H1751Q1749 1055.500 1749 1053.500V1050M1766.500 1048V1052"/><path d="M1754 1048H1762V1052.500H1752V1050Z" fill="#fff"/><path d="M1750.500 1040L1747 1046H1750L1749 1050L1754 1044H1751Z" fill="#fff" stroke="none"/></svg>
  <p class="clock">14:39<br>12-04-2023</p><span class="badge">2</span>
</nav>
</body>
</html>
```
FILE: styles.css
```css
* { box-sizing: border-box; }
body { margin: 0; width: 1920px; height: 1080px; overflow: hidden; font-family: "Open Sans", "Noto Sans", sans-serif; white-space: nowrap; }
svg { display: block; flex: none; }
p { margin: 0; }
.defs { position: absolute; }
.desktop { display: flex; height: 1020px; }

/* Zoom window */
.zoom { width: 1433px; height: 1020px; background: #1a1a1a; border: 1px solid #777; display: flex; flex-direction: column; }
.z-title { position: relative; height: 37px; background: #f2f2f2; display: flex; align-items: center; padding-left: 9px; flex: none; }
.z-logo { width: 20px; height: 20px; border-radius: 50%; background: #0b5cff; color: #fff; font-size: 6px; font-weight: 600; line-height: 19px; text-align: center; }
.z-name { color: #8f8f8f; font-size: 15px; letter-spacing: -0.25px; margin: -2px 0 0 6px; }
.z-ctl { margin: 0 24px 0 auto; }
.banner { position: absolute; left: 436px; top: -1px; height: 27px; display: flex; border-radius: 0 0 5px 5px; overflow: hidden; box-shadow: 0 2px 4px rgba(0,0,0,.3); font-weight: 700; font-size: 14px; line-height: 27px; }
.viewing { width: 315px; background: #23d959; color: #2d4433; text-align: center; letter-spacing: -0.05px; }
.options { width: 152px; background: #242628; color: #f2f2f2; display: flex; align-items: center; padding-left: 19px; font-size: 13.500px; letter-spacing: 0; }
.options svg { margin-left: auto; margin-right: 12px; }

.gallery { display: flex; height: 122px; padding: 4px 0 0 207px; flex: none; }
.tiles { display: flex; gap: 4px; }
.tile { position: relative; width: 200px; height: 113px; background: #222; color: #fff; display: flex; justify-content: center; align-items: center; }
.tile strong { font-size: 20.500px; font-weight: 700; letter-spacing: 0; margin-top: -1px; }
.tile .wide { word-spacing: 4.500px; }
.tile .caps { letter-spacing: 0.25px; }
.photo { width: 100px; height: 100px; background: #040404; margin: -2px 0 0 0; display: flex; align-items: center; justify-content: center; font: italic 11px "Liberation Serif", serif; color: #d8d8d8; letter-spacing: 0.5px; }
.photo b { color: #b01a2c; font-size: 19px; font-weight: 400; }
.hand { position: absolute; left: 10px; top: 8px; width: 25px; height: 31px; }
.tag { position: absolute; left: 0; bottom: 0; height: 24px; background: rgba(48,48,48,.85); display: flex; align-items: center; font-size: 14.500px; letter-spacing: -0.17px; }
.tag svg { width: 16px; height: 18px; margin: 0 7px 0 5px; }
.w1 { width: 146px; } .w2 { width: 148px; } .w3 { width: 136px; } .w4 { width: 200px; letter-spacing: 0; } .w5 { width: 156px; letter-spacing: 0.5px; }
.next { width: 40px; height: 40px; margin: 37px 0 0 18px; border: 4px solid #fff; border-radius: 50%; background: #0e72ed; }
.viewbtn { width: 69px; height: 33px; margin: 3px 0 0 71px; border-radius: 8px; background: #212121; color: #ddd; display: flex; align-items: center; gap: 6px; padding: 0 0 2px 8px; font-size: 14px; }
.rec { display: flex; align-items: center; height: 49px; padding: 0 0 2px 10px; color: #e6e6e6; font-size: 13.500px; letter-spacing: -0.2px; flex: none; }
.shield { width: 30px; height: 30px; border-radius: 6px; background: #232323; display: grid; place-items: center; }
.recdot { width: 15px; height: 15px; margin: 0 12px 0 17px; border-radius: 50%; background: radial-gradient(circle at 50% 40%, #f3d4d0, #d8493c 45%, #7c1d18); }

/* Paint, inside the shared screen */
.paint { position: relative; height: 744px; background: #f1f1f1; display: flex; flex-direction: column; flex: none; color: #222; }
.p-title { height: 31px; display: flex; align-items: center; padding-left: 12px; font-size: 11px; flex: none; letter-spacing: -0.15px; }
.p-title span { margin: -4px 0 0 14px; }
.p-title svg { margin-top: -8px; }
.p-ctl { margin: -3px 19px 0 auto !important; }
.p-menu { height: 35px; display: flex; align-items: center; padding-left: 13px; font-size: 12px; flex: none; }
.m1 { width: 47px; } .m2 { width: 35px; }
.share { margin-left: auto; margin-right: 10px; }
.ribbon { height: 111px; background: #f8f6fa; border-top: 1px solid #e6e4e8; border-bottom: 1px solid #e2e0e4; display: flex; flex: none; }
.grp { display: flex; flex-direction: column; position: relative; border-right: 1px solid #e3e1e6; height: 103px; margin-top: 3px; }
.grp > svg { margin-top: -3px; }
.grp label { text-align: center; font-size: 11px; color: #606060; line-height: 22px; }
.g1 { width: 98px; } .g1 label { padding-left: 3px; }
.g2 { width: 142px; } .g2 label { padding-right: 2px; }
.g3 { width: 128px; }
.g4 { width: 62px; }
.g5 { width: 258px; }
.g6 { width: 53px; }
.g7 { width: 350px; border: 0; }
.colrow { display: flex; height: 79px; padding: 9px 0 0 20px; }
.current { display: flex; flex-direction: column; align-items: center; gap: 10px; width: 27px; }
.c1 { width: 27px; height: 27px; border-radius: 50%; border: 1px solid #3a6ea5; background: #ed1c24; box-shadow: inset 0 0 0 2px #fff; }
.c2 { width: 23px; height: 23px; border-radius: 50%; border: 1px solid #8a8a8a; background: #fff; }
.palette { display: grid; grid-template-columns: repeat(10, 15px); grid-auto-rows: 15px; gap: 7.350px; margin: 2px 0 0 20px; }
.palette i { border-radius: 50%; border: 1px solid rgba(70,70,70,.5); }
.wheel { position: relative; width: 22px; height: 22px; border-radius: 50%; margin: 23px 0 0 22px; background: radial-gradient(circle, #fff, transparent 70%), conic-gradient(#9f4, #4f8 15%, #0cf 28%, #04f 42%, #90f 55%, #f0a 68%, #f22 80%, #fa0 90%, #9f4); }
.wheel span { position: absolute; right: -3px; top: -3px; width: 11px; height: 11px; border: 1px solid #555; border-radius: 50%; background: #fff; font-size: 11px; line-height: 8px; text-align: center; }
.g7 label { width: 350px; }
.stage { position: relative; height: 538px; padding-left: 30px; background: #f6f4f8; display: flex; flex: none; }
.canvas { background: #fdfdfd; }
.ink { font: 700 13px Lato, "Open Sans", sans-serif; }
.vbar { width: 5px; height: 197px; background: #858387; margin: 66px 0 0 5px; }
.textbar { position: absolute; left: 374px; top: 0; width: 684px; height: 46px; background: #f8f6fa; border-radius: 0 0 7px 7px; box-shadow: 0 3px 6px rgba(0,0,0,.14); display: flex; align-items: center; padding: 1px 0 0 8px; font-size: 12.500px; letter-spacing: -0.1px; }
.sel { height: 30px; background: #fff; border: 1px solid #eceaee; border-radius: 4px; display: flex; align-items: center; justify-content: space-between; padding: 0 13px 0 10px; }
.s1 { width: 176px; } .s2 { width: 67px; margin: 0 8px; }
.check { width: 19px; height: 19px; border: 1px solid #8d8d8d; border-radius: 4px; background: #f2f2f2; margin: 0 8px 0 4px; }
.hscroll { height: 15px; padding: 6px 0 0 16px; background: #efedf1; border-bottom: 1px solid #e4e4e6; flex: none; }
.hscroll i { display: block; width: 685px; height: 4px; background: #858387; }
.p-status { height: 14px; flex: none; overflow: hidden; }
.tiny text { font: 11px "Open Sans", sans-serif; fill: #222; stroke: none; }
.annot { position: absolute; left: 15px; top: 680px; width: 50px; height: 50px; border-radius: 50%; background: rgba(42,45,48,.92); border: 2px solid #26292b; display: grid; place-items: center; }

/* Zoom meeting controls */
.z-bar { position: relative; height: 66px; display: flex; flex: none; padding-left: 8px; color: #b5b5b5; font-size: 14.500px; letter-spacing: -0.1px; }
.zb { display: flex; flex-direction: column; align-items: center; padding-top: 4px; }
.zb span { line-height: 24px; }
.b1 { width: 100px; } .b2 { width: 120px; margin-left: 6px; } .b3 { width: 150px; margin-left: 193px; } .b4 { width: 100px; margin-left: 13px; }
.b5 { width: 88px; margin-left: 24px; color: #23d959; } .b6 { width: 60px; margin-left: 38px; } .b7 { width: 66px; margin-left: 37px; } .b8 { width: 60px; margin-left: 37px; }
.cnt { font: 14.500px "Open Sans", sans-serif; }
.leave { width: 77px; height: 34px; margin: 16px 0 0 239px; border: 0; border-radius: 8px; background: #b52323; color: #fff; font: 700 14px "Open Sans", sans-serif; letter-spacing: -0.3px; padding: 0 0 2px; }
.lower { position: absolute; left: 892px; top: -54px; width: 159px; height: 55px; border-radius: 16px; background: #2e2e2e; padding: 10px; }
.lower div { height: 35px; border-radius: 10px; background: #434343; color: #fff; font-weight: 700; font-size: 14.500px; display: flex; align-items: center; gap: 10px; padding: 1px 0 0 11px; }

/* Notepad */
.notepad { position: relative; width: 488px; height: 1020px; border: 1px solid #777; border-left-width: 2px; margin-left: -1px; background: #f9f9f9; display: flex; flex-direction: column; box-shadow: -2px 0 28px rgba(0,0,0,.36); }
.n-title { height: 51px; background: #cadcea; display: flex; flex: none; }
.n-ico { margin: 21px 0 0 22px; }
.tab { width: 156px; height: 39px; margin: 12px 0 0 22px; border-radius: 8px 8px 0 0; background: #eef4f9; display: flex; align-items: center; justify-content: space-between; padding: 0 21px 0 10px; font-size: 14px; font-weight: 600; color: #2a2a2a; letter-spacing: 0; }
.plus { margin: 26px 0 0 24px; }
.n-ctl { margin: 11px 0 0 79px; }
.n-menu { height: 41px; background: #eef4f9; border-bottom: 1px solid #e0e4e8; display: flex; align-items: center; padding: 2px 19px 0 18px; font-size: 15px; color: #222; flex: none; letter-spacing: -0.1px; }
.n-menu span { width: 63.500px; }
.n-menu svg { margin: -2px 0 0 auto; }
.doc { margin: 0; padding: 21px 0 0 20px; height: 886px; font: 16.610px/22px "DejaVu Sans Mono", monospace; color: #111; flex: none; }
.n-status { flex: 1; background: #eef4f9; border-top: 1px solid #dfe3e7; display: flex; align-items: center; padding: 1px 0 0 27px; font-size: 14.300px; color: #5a5f63; letter-spacing: -0.1px; line-height: 20px; }
.n-status span { border-right: 1px solid #d5d9dd; overflow: hidden; margin-right: 14px; }
.st1 { width: 82px; } .st2 { width: 66px; } .st3 { width: 121px; } .n-status .st4 { border: 0; }

/* Taskbar */
.taskbar { height: 60px; display: flex; align-items: center; color: #fff; font-size: 14px; line-height: 20px; letter-spacing: -0.2px; background: linear-gradient(90deg, #12283c 0, #12283c 580px, #2c2419 640px, #272727 800px, #2e2316 900px, #2b2418 1000px, #2a2726 1130px, #2e2216 1220px, #13273a 1320px, #12283c); }
.weather { display: flex; align-items: center; gap: 12px; width: 557px; padding: 0 0 0 28px; }
.weather p { letter-spacing: 0; }
.weather span { color: #c5ccd3; }
.start { margin-top: 1px; }
.search { position: relative; width: 274px; height: 40px; margin-left: 17px; border-radius: 20px; background: rgba(120,120,120,.34); display: flex; align-items: center; padding-left: 15px; gap: 12px; font-size: 16.500px; color: #ddd; overflow: hidden; }
.art { margin: 6px 0 0 auto; }
.apps { margin-left: 9px; }
.zt { font: 600 9px "Open Sans", sans-serif; fill: #fff; }
.tray { margin-left: 135px; }
.lang { width: 76px; text-align: center; letter-spacing: 0; }
.net { margin-left: -3px; }
.clock { width: 96px; text-align: right; font-size: 15px; }
.badge { width: 20px; height: 20px; margin-left: 9px; border-radius: 50%; background: #4cc2ff; color: #123; font-size: 12px; text-align: center; }
```
